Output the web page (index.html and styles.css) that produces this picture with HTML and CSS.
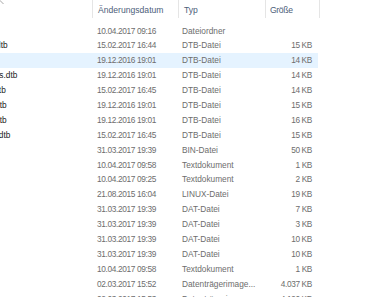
FILE: index.html
```html
<html>
<head>
   <meta charset="utf-8">
   <link rel="stylesheet" href="styles.css">
</head>
<body>
   <div class="explorer">
      <!-- sort arrow of the name column, scrolled mostly out of view -->
      <svg class="sort-arrow" width="8" height="5" viewBox="0 0 8 5">
         <polyline points="0.5,4 4,0.5 7.5,4" fill="none" stroke="#a6a6a6" stroke-width="1"/>
      </svg>
      <div class="header-row">
         <div class="col-name"></div>
         <div class="col-date head-cell">Änderungsdatum</div>
         <div class="col-type head-cell">Typ</div>
         <div class="col-size head-cell">Größe</div>
      </div>
      <div class="file-list">
         <div class="file-row">
            <div class="col-name"><span class="file-name">overlays</span></div>
            <div class="col-date">10.04.2017 09:16</div>
            <div class="col-type">Dateiordner</div>
            <div class="col-size"></div>
         </div>
         <div class="file-row">
            <div class="col-name"><span class="file-name">bcm2708-rpi-0-w.dtb</span></div>
            <div class="col-date">15.02.2017 16:44</div>
            <div class="col-type">DTB-Datei</div>
            <div class="col-size">15 KB</div>
         </div>
         <div class="file-row row-hover">
            <div class="col-name"><span class="file-name">bcm2708-rpi-b.dtb</span></div>
            <div class="col-date">19.12.2016 19:01</div>
            <div class="col-type">DTB-Datei</div>
            <div class="col-size">14 KB</div>
         </div>
         <div class="file-row">
            <div class="col-name"><span class="file-name">bcm2708-rpi-b-plus.dtb</span></div>
            <div class="col-date">19.12.2016 19:01</div>
            <div class="col-type">DTB-Datei</div>
            <div class="col-size">14 KB</div>
         </div>
         <div class="file-row">
            <div class="col-name"><span class="file-name">bcm2708-rpi-cm.dtb</span></div>
            <div class="col-date">15.02.2017 16:45</div>
            <div class="col-type">DTB-Datei</div>
            <div class="col-size">14 KB</div>
         </div>
         <div class="file-row">
            <div class="col-name"><span class="file-name">bcm2709-rpi-2-b.dtb</span></div>
            <div class="col-date">19.12.2016 19:01</div>
            <div class="col-type">DTB-Datei</div>
            <div class="col-size">15 KB</div>
         </div>
         <div class="file-row">
            <div class="col-name"><span class="file-name">bcm2710-rpi-3-b.dtb</span></div>
            <div class="col-date">19.12.2016 19:01</div>
            <div class="col-type">DTB-Datei</div>
            <div class="col-size">16 KB</div>
         </div>
         <div class="file-row">
            <div class="col-name"><span class="file-name">bcm2710-rpi-cm3.dtb</span></div>
            <div class="col-date">15.02.2017 16:45</div>
            <div class="col-type">DTB-Datei</div>
            <div class="col-size">15 KB</div>
         </div>
         <div class="file-row">
            <div class="col-name"><span class="file-name">bootcode.bin</span></div>
            <div class="col-date">31.03.2017 19:39</div>
            <div class="col-type">BIN-Datei</div>
            <div class="col-size">50 KB</div>
         </div>
         <div class="file-row">
            <div class="col-name"><span class="file-name">cmdline.txt</span></div>
            <div class="col-date">10.04.2017 09:58</div>
            <div class="col-type">Textdokument</div>
            <div class="col-size">1 KB</div>
         </div>
         <div class="file-row">
            <div class="col-name"><span class="file-name">config.txt</span></div>
            <div class="col-date">10.04.2017 09:25</div>
            <div class="col-type">Textdokument</div>
            <div class="col-size">2 KB</div>
         </div>
         <div class="file-row">
            <div class="col-name"><span class="file-name">COPYING.linux</span></div>
            <div class="col-date">21.08.2015 16:04</div>
            <div class="col-type">LINUX-Datei</div>
            <div class="col-size">19 KB</div>
         </div>
         <div class="file-row">
            <div class="col-name"><span class="file-name">fixup.dat</span></div>
            <div class="col-date">31.03.2017 19:39</div>
            <div class="col-type">DAT-Datei</div>
            <div class="col-size">7 KB</div>
         </div>
         <div class="file-row">
            <div class="col-name"><span class="file-name">fixup_cd.dat</span></div>
            <div class="col-date">31.03.2017 19:39</div>
            <div class="col-type">DAT-Datei</div>
            <div class="col-size">3 KB</div>
         </div>
         <div class="file-row">
            <div class="col-name"><span class="file-name">fixup_db.dat</span></div>
            <div class="col-date">31.03.2017 19:39</div>
            <div class="col-type">DAT-Datei</div>
            <div class="col-size">10 KB</div>
         </div>
         <div class="file-row">
            <div class="col-name"><span class="file-name">fixup_x.dat</span></div>
            <div class="col-date">31.03.2017 19:39</div>
            <div class="col-type">DAT-Datei</div>
            <div class="col-size">10 KB</div>
         </div>
         <div class="file-row">
            <div class="col-name"><span class="file-name">issue.txt</span></div>
            <div class="col-date">10.04.2017 09:58</div>
            <div class="col-type">Textdokument</div>
            <div class="col-size">1 KB</div>
         </div>
         <div class="file-row">
            <div class="col-name"><span class="file-name">kernel.img</span></div>
            <div class="col-date">02.03.2017 15:52</div>
            <div class="col-type">Datenträgerimage...</div>
            <div class="col-size">4.037 KB</div>
         </div>
         <div class="file-row">
            <div class="col-name"><span class="file-name">kernel7.img</span></div>
            <div class="col-date">02.03.2017 15:53</div>
            <div class="col-type">Datenträgerimage...</div>
            <div class="col-size">4.190 KB</div>
         </div>
      </div>
   </div>
</body>
</html>
```
FILE: styles.css
```css
html, body {
   margin: 0;
   padding: 0;
   background-color: white;
   overflow: hidden;
}
.explorer {
   position: relative;
   width: 370px;
   height: 297px;
   overflow: hidden;
   font-family: "Liberation Sans", Arial, sans-serif;
   font-size: 8.3px;
   color: #6d6d6d;
}
.sort-arrow {
   position: absolute;
   left: -4px;
   top: 0;
}
.header-row {
   display: flex;
   height: 18px;
   width: 321px;
}
.head-cell {
   border-left: 1px solid #e5e5e5;
   color: #4c607a;
   font-size: 8.6px;
   line-height: 21px;
   padding-left: 4px;
}
.header-row .col-size {
   border-right: 1px solid #e5e5e5;
   text-align: left;
   padding-right: 0;
}
.file-list {
   padding-top: 5.5px;
}
.file-row {
   display: flex;
   height: 14.9px;
   line-height: 14.9px;
   width: 318px;
   white-space: nowrap;
}
.row-hover {
   background-color: #e5f3ff;
}
.col-name {
   width: 92px;
   overflow: hidden;
   flex-shrink: 0;
}
.file-name {
   display: inline-block;
   margin-left: -68px;
   color: #1a1a1a;
}
.col-date {
   width: 80px;
   padding-left: 5px;
   flex-shrink: 0;
   letter-spacing: -0.35px;
}
.col-type {
   width: 81px;
   padding-left: 5px;
   flex-shrink: 0;
   overflow: hidden;
}
.col-size {
   width: 49px;
   padding-right: 6px;
   text-align: right;
   flex-shrink: 0;
   letter-spacing: -0.35px;
}
.header-row .col-date, .header-row .col-type {
   letter-spacing: 0;
}
```
